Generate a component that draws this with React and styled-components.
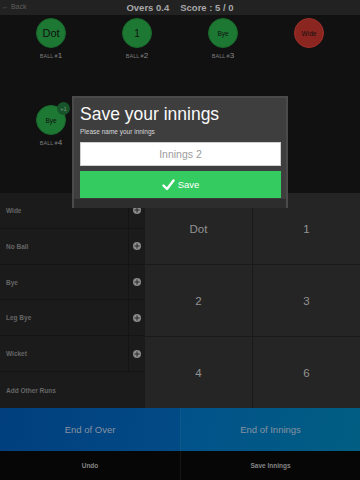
import React from "react";
import styled, { createGlobalStyle } from "styled-components";

const Global = createGlobalStyle`
  html, body { margin: 0; padding: 0; background: #111; }
  body { font-family: "Liberation Sans", Arial, sans-serif; }
  * { box-sizing: border-box; }
`;

const Page = styled.div`
  position: relative;
  width: 360px;
  height: 480px;
  background: #111;
  display: flex;
  flex-direction: column;
  overflow: hidden;
`;

const TopBar = styled.div`
  height: 15px;
  background: #222;
  position: relative;
  display: flex;
  align-items: center;
  justify-content: center;
  gap: 11px;
  color: #a8a8a8;
  font-size: 9.5px;
  font-weight: bold;
`;

const Back = styled.span`
  position: absolute;
  left: 2px;
  top: 3px;
  font-size: 7px;
  font-weight: normal;
  color: #5e5e5e;
`;

const Balls = styled.div`
  height: 178px;
  padding: 0 8px;
  display: grid;
  grid-template-columns: repeat(4, 86px);
  grid-template-rows: 87px 87px;
`;

const BallItem = styled.div`
  display: flex;
  flex-direction: column;
  align-items: center;
  padding-top: 3px;
`;

const Circle = styled.div`
  position: relative;
  width: 30px;
  height: 30px;
  border-radius: 50%;
  background: ${p => (p.$red ? "#8b2520" : "#1d7833")};
  border: 1px solid ${p => (p.$red ? "#a1302a" : "#19682c")};
  display: flex;
  align-items: center;
  justify-content: center;
  color: #111;
  font-size: ${p => p.$size}px;
`;

const Badge = styled.div`
  position: absolute;
  right: -5px;
  top: -4px;
  width: 13px;
  height: 13px;
  border-radius: 50%;
  background: #17542a;
  color: #7a9c82;
  font-size: 5.5px;
  display: flex;
  align-items: center;
  justify-content: center;
`;

const BallLabel = styled.div`
  margin-top: 3px;
  color: #7c7c7c;
  font-size: 5.5px;
  line-height: 9px;
  span { font-size: 8px; color: #8a8a8a; }
`;

const Panel = styled.div`
  height: 215px;
  display: grid;
  grid-template-columns: 144px 216px;
`;

const List = styled.div`
  display: grid;
  grid-template-rows: repeat(6, 1fr);
  background: #1b1b1b;
`;

const ListRow = styled.div`
  display: grid;
  grid-template-columns: ${p => (p.$full ? "1fr" : "128px 16px")};
  border-bottom: 1px solid #141414;
  &:last-child { border-bottom: none; }
`;

const ListLabel = styled.div`
  display: flex;
  align-items: center;
  padding-left: 6px;
  color: #666;
  font-size: 6.5px;
  font-weight: bold;
`;

const PlusCell = styled.div`
  border-left: 1px solid #141414;
  display: flex;
  align-items: center;
  justify-content: center;
`;

const Plus = styled.div`
  width: 8px;
  height: 8px;
  border-radius: 50%;
  background: #8a8a8a;
  position: relative;
  &::before, &::after {
    content: "";
    position: absolute;
    background: #2a2a2a;
    left: 50%;
    top: 50%;
    transform: translate(-50%, -50%);
  }
  &::before { width: 5px; height: 1px; }
  &::after { width: 1px; height: 5px; }
`;

const Runs = styled.div`
  display: grid;
  grid-template-columns: 1fr 1fr;
  grid-template-rows: repeat(3, 1fr);
  background: #1a1a1a;
  gap: 1px;
  padding-left: 1px;
`;

const RunCell = styled.div`
  background: #252525;
  display: flex;
  align-items: center;
  justify-content: center;
  color: #939393;
  font-size: 11.5px;
`;

const ActionBar = styled.div`
  height: 43px;
  display: grid;
  grid-template-columns: 180px 180px;
`;

const Action = styled.div`
  background: ${p => p.$bg};
  display: flex;
  align-items: center;
  justify-content: center;
  color: #8892a0;
  font-size: 9.5px;
  border-left: ${p => (p.$divider ? "1px solid #0b5a86" : "none")};
`;

const BottomBar = styled.div`
  flex: 1;
  background: #060606;
  display: grid;
  grid-template-columns: 180px 180px;
`;

const BottomBtn = styled.div`
  display: flex;
  align-items: center;
  justify-content: center;
  color: #858585;
  font-size: 6.5px;
  font-weight: bold;
  border-left: ${p => (p.$divider ? "1px solid #151515" : "none")};
`;

const Dialog = styled.div`
  position: absolute;
  left: 72px;
  top: 96px;
  width: 216px;
  height: 112px;
  background: #3e3e3e;
  border: 2px solid #4a4a4a;
  border-bottom: none;
  display: flex;
  flex-direction: column;
  padding: 6px 5px 0 6px;
`;

const DialogTitle = styled.div`
  color: #fafafa;
  font-size: 17.5px;
  line-height: 20px;
`;

const DialogHint = styled.div`
  margin-top: 4px;
  color: #d8d8d8;
  font-size: 6.5px;
  line-height: 8px;
`;

const Input = styled.div`
  margin-top: 6px;
  height: 24px;
  background: #fff;
  border: 1px solid #d0d0d0;
  display: flex;
  align-items: center;
  justify-content: center;
  color: #9c9c9c;
  font-size: 10.5px;
`;

const SaveButton = styled.div`
  margin-top: 5px;
  height: 27px;
  background: #34cb61;
  display: flex;
  align-items: center;
  justify-content: center;
  gap: 3px;
  color: #fff;
  font-size: 9.5px;
`;

const DialogFoot = styled.div`
  flex: 1;
  margin: 0 -5px 0 -6px;
  border-top: 1px solid #3a3a3a;
  background: #2d2d2d;
`;

const balls = [
  { t: "Dot", size: 11, n: 1 },
  { t: "1", size: 10, n: 2 },
  { t: "Bye", size: 6.5, n: 3 },
  { t: "Wide", size: 6.5, red: true },
  { t: "Bye", size: 6.5, badge: "+1", n: 4 },
];

const extras = ["Wide", "No Ball", "Bye", "Leg Bye", "Wicket"];

export default function App() {
  return (
    <Page>
      <Global />
      <TopBar>
        <Back>← Back</Back>
        <span>Overs 0.4</span>
        <span>Score : 5 / 0</span>
      </TopBar>
      <Balls>
        {balls.map((b, i) => (
          <BallItem key={i}>
            <Circle $red={b.red} $size={b.size}>
              {b.t}
              {b.badge && <Badge>{b.badge}</Badge>}
            </Circle>
            {b.n && (
              <BallLabel>
                BALL #<span>{b.n}</span>
              </BallLabel>
            )}
          </BallItem>
        ))}
      </Balls>
      <Panel>
        <List>
          {extras.map(e => (
            <ListRow key={e}>
              <ListLabel>{e}</ListLabel>
              <PlusCell>
                <Plus />
              </PlusCell>
            </ListRow>
          ))}
          <ListRow $full>
            <ListLabel>Add Other Runs</ListLabel>
          </ListRow>
        </List>
        <Runs>
          {["Dot", "1", "2", "3", "4", "6"].map(r => (
            <RunCell key={r}>{r}</RunCell>
          ))}
        </Runs>
      </Panel>
      <ActionBar>
        <Action $bg="linear-gradient(100deg, #013f7e, #024b86)">End of Over</Action>
        <Action $divider $bg="linear-gradient(100deg, #01528a, #015e82)">End of Innings</Action>
      </ActionBar>
      <BottomBar>
        <BottomBtn>Undo</BottomBtn>
        <BottomBtn $divider>Save Innings</BottomBtn>
      </BottomBar>
      <Dialog>
        <DialogTitle>Save your innings</DialogTitle>
        <DialogHint>Please name your innings</DialogHint>
        <Input>Innings 2</Input>
        <SaveButton>
          <svg width="13" height="12" viewBox="0 0 13 12">
            <path d="M1.5 6.5 L5 10 L11.5 1.5" fill="none" stroke="#fff" strokeWidth="2.4" strokeLinecap="round" strokeLinejoin="round" />
          </svg>
          Save
        </SaveButton>
        <DialogFoot />
      </Dialog>
    </Page>
  );
}
